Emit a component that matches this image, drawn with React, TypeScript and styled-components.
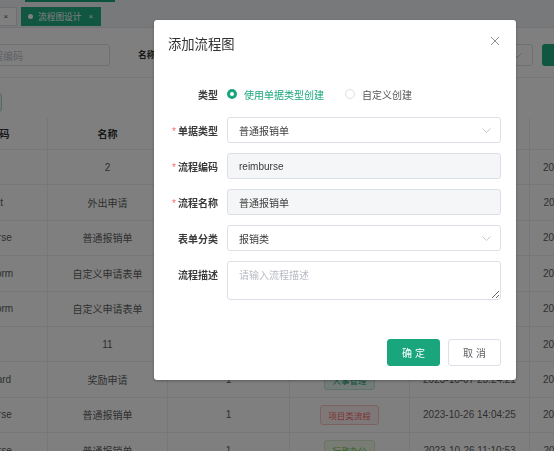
import styled, { createGlobalStyle } from "styled-components";

const GREEN = "#19a67c";

const GlobalStyle = createGlobalStyle`
  html, body {
    margin: 0;
    padding: 0;
    background: #fff;
    overflow: hidden;
  }
  body {
    font-family: "Liberation Sans", "Noto Sans CJK SC", sans-serif;
  }
  * {
    box-sizing: border-box;
  }
`;

/* ---------- background page (scrolled to the right) ---------- */

const Page = styled.div`
  width: 722px;
  height: 451px;
  margin-left: -72px;
  overflow: hidden;
`;

const NavStrip = styled.div`
  height: 3px;
  background: #f0f2f5;
  display: flex;
  align-items: flex-start;
`;

const ActiveLine = styled.div`
  margin-left: 97px;
  width: 90px;
  height: 2px;
  background: ${GREEN};
`;

const TabBar = styled.div`
  height: 25px;
  background: #f0f2f5;
  border-bottom: 1px solid #e4e7ed;
  display: flex;
  align-items: flex-start;
  gap: 4px;
  padding: 4px 0 0 42px;
`;

const Tab = styled.div<{ $active?: boolean }>`
  height: 19px;
  display: flex;
  align-items: center;
  gap: 5px;
  padding: ${({ $active }) => ($active ? "0 7px 0 6px" : "0 8px")};
  font-size: 8.7px;
  color: ${({ $active }) => ($active ? "#fff" : "#495060")};
  background: ${({ $active }) => ($active ? "#22ad83" : "#fff")};
  border: 1px solid ${({ $active }) => ($active ? "#22ad83" : "#dcdfe6")};
`;

const TabDot = styled.span`
  width: 5px;
  height: 5px;
  border-radius: 50%;
  background: #fff;
`;

const TabClose = styled.span`
  margin-left: 2px;
  font-size: 8px;
`;

const SearchRow = styled.div`
  height: 50px;
  border-bottom: 1px solid #ebeef5;
  display: flex;
  align-items: flex-start;
  padding: 16px 48px 0 14px;
`;

const SearchInput = styled.div<{ $width: number }>`
  width: ${({ $width }) => $width}px;
  height: 22px;
  border: 1px solid #dcdfe6;
  border-radius: 3px;
  display: flex;
  align-items: center;
  justify-content: space-between;
  padding: 0 10px;
  font-size: 10px;
  color: #c0c4cc;
`;

const SearchLabel = styled.label`
  margin: 0 8px 0 28px;
  line-height: 22px;
  font-size: 8.7px;
  font-weight: 700;
  color: #303133;
`;

const Spacer = styled.div`
  flex: 1;
`;

const SearchButton = styled.div`
  width: 60px;
  height: 22px;
  margin-left: 9px;
  border-radius: 3px;
  background: #22ad83;
`;

const Toolbar = styled.div`
  height: 40px;
  padding: 15px 0 0 14px;
`;

const AddButton = styled.div`
  width: 60px;
  height: 19px;
  border-radius: 3px;
  background: #e8f6f1;
  border: 1px solid #a3dbc7;
`;

const Table = styled.div`
  margin-left: 4px;
`;

const Row = styled.div<{ $head?: boolean }>`
  display: grid;
  grid-template-columns: 116px 120px 122px 120px 120px 120px;
  height: ${({ $head }) => ($head ? "32px" : "35.4px")};
`;

const Cell = styled.div<{ $head?: boolean }>`
  display: flex;
  align-items: center;
  justify-content: center;
  white-space: nowrap;
  border-right: 1px solid #ebeef5;
  border-bottom: 1px solid #ebeef5;
  font-size: 10px;
  font-weight: ${({ $head }) => ($head ? 700 : 400)};
  color: ${({ $head }) => ($head ? "#303133" : "#5e5e5e")};
`;

type Tone = "teal" | "red" | "lime";

const toneColors: Record<Tone, [string, string, string]> = {
  teal: ["#e6f6f0", "#bfe6d8", "#19a67c"],
  red: ["#fef0f0", "#fbc4c4", "#f56c6c"],
  lime: ["#f0f9eb", "#d4ecc6", "#67c23a"],
};

const Tag = styled.span<{ $tone: Tone }>`
  height: 20px;
  display: inline-flex;
  align-items: center;
  padding: 0 7px;
  border-radius: 3px;
  font-size: 8.5px;
  background: ${({ $tone }) => toneColors[$tone][0]};
  border: 1px solid ${({ $tone }) => toneColors[$tone][1]};
  color: ${({ $tone }) => toneColors[$tone][2]};
`;

/* ---------- dialog ---------- */

const Mask = styled.div`
  position: fixed;
  inset: 0;
  background: rgba(0, 0, 0, 0.5);
`;

const Dialog = styled.div`
  position: fixed;
  left: 154px;
  top: 20px;
  width: 362px;
  height: 360px;
  background: #fff;
  border-radius: 3px;
  box-shadow: 0 1px 3px rgba(0, 0, 0, 0.3);
  display: flex;
  flex-direction: column;
`;

const DialogHeader = styled.div`
  height: 46px;
  display: flex;
  align-items: center;
  justify-content: space-between;
  padding: 0 16px 0 14px;
`;

const DialogTitle = styled.span`
  font-size: 13.3px;
  color: #303133;
`;

const CloseButton = styled.span`
  display: flex;
  margin-top: -5px;
`;

const DialogBody = styled.div`
  padding: 15px 15px 0 0;
  display: flex;
  flex-direction: column;
  gap: 10px;
`;

const FormRow = styled.div`
  display: grid;
  grid-template-columns: 64px 1fr;
  column-gap: 9px;
  align-items: center;
`;

const FormLabel = styled.label<{ $top?: boolean }>`
  text-align: right;
  align-self: ${({ $top }) => ($top ? "start" : "center")};
  padding-top: ${({ $top }) => ($top ? "6px" : "0")};
  font-size: 10px;
  font-weight: 600;
  color: #3a3a3a;
  white-space: nowrap;
`;

const Required = styled.span`
  color: #f56c6c;
  font-weight: 400;
  margin-right: 2px;
`;

const RadioGroup = styled.div`
  height: 26px;
  display: flex;
  align-items: center;
  gap: 21px;
`;

const RadioItem = styled.span<{ $checked?: boolean }>`
  display: flex;
  align-items: center;
  gap: 7px;
  font-size: 10px;
  color: ${({ $checked }) => ($checked ? GREEN : "#555")};
`;

const RadioDot = styled.span<{ $checked?: boolean }>`
  width: 10px;
  height: 10px;
  border-radius: 50%;
  border: ${({ $checked }) => ($checked ? `3px solid ${GREEN}` : "1px solid #dcdfe6")};
  background: #fff;
`;

const InputBox = styled.div<{ $disabled?: boolean }>`
  height: 26px;
  border: 1px solid #dcdfe6;
  border-radius: 3px;
  background: ${({ $disabled }) => ($disabled ? "#f5f6f7" : "#fff")};
  display: flex;
  align-items: center;
  justify-content: space-between;
  padding: 0 9px 0 11px;
  font-size: 10px;
  color: #3a3a3a;
`;

const TextArea = styled.textarea`
  height: 38.5px;
  border: 1px solid #dcdfe6;
  border-radius: 3px;
  padding: 5px 11px;
  font-family: inherit;
  font-size: 10px;
  color: #333;
  resize: vertical;
  outline: none;
  display: block;
  width: 100%;

  &::placeholder {
    color: #b8bbc2;
  }
`;

const DialogFooter = styled.div`
  margin-top: auto;
  display: flex;
  justify-content: flex-end;
  gap: 8px;
  padding: 0 15px 14px 0;
`;

const Button = styled.button<{ $primary?: boolean }>`
  width: 53px;
  height: 27px;
  border-radius: 3px;
  font-family: inherit;
  font-size: 10px;
  cursor: pointer;
  background: ${({ $primary }) => ($primary ? GREEN : "#fff")};
  color: ${({ $primary }) => ($primary ? "#fff" : "#606266")};
  border: 1px solid ${({ $primary }) => ($primary ? GREEN : "#dcdfe6")};
`;

const Chevron = () => (
  <svg width="9" height="5" viewBox="0 0 9 5">
    <polyline points="0.5,0.5 4.5,4.5 8.5,0.5" fill="none" stroke="#c0c4cc" strokeWidth="0.9" />
  </svg>
);

const CloseIcon = () => (
  <svg width="10" height="10" viewBox="0 0 10 10">
    <path d="M1 1 L9 9 M9 1 L1 9" stroke="#909399" strokeWidth="1" />
  </svg>
);

interface FlowRow {
  code: string;
  name: string;
  tag: string;
  tone: Tone;
  created: string;
  updated: string;
}

const rows: FlowRow[] = [
  { code: "2", name: "2", tag: "行政办公", tone: "lime", created: "2023-09-28 10:12:36", updated: "2023-09-28 10:12:36" },
  { code: "goOut", name: "外出申请", tag: "行政办公", tone: "lime", created: "2023-09-28 16:20:11", updated: "2023-09-28 16:20:11" },
  { code: "reimburse", name: "普通报销单", tag: "报销类", tone: "teal", created: "2023-09-29 09:41:05", updated: "2023-09-29 09:41:05" },
  { code: "applyForm", name: "自定义申请表单", tag: "行政办公", tone: "lime", created: "2023-10-05 13:22:48", updated: "2023-10-05 13:22:48" },
  { code: "applyForm", name: "自定义申请表单", tag: "行政办公", tone: "lime", created: "2023-10-05 14:30:02", updated: "2023-10-05 14:30:02" },
  { code: "11", name: "11", tag: "人事管理", tone: "teal", created: "2023-10-06 18:07:42", updated: "2023-10-06 18:07:42" },
  { code: "hrReward", name: "奖励申请", tag: "人事管理", tone: "teal", created: "2023-10-07 23:24:21", updated: "2023-10-07 23:24:21" },
  { code: "reimburse", name: "普通报销单", tag: "项目类流程", tone: "red", created: "2023-10-26 14:04:25", updated: "2023-10-26 14:04:25" },
  { code: "reimburse", name: "普通报销单", tag: "行政办公", tone: "lime", created: "2023-10-26 11:10:53", updated: "2023-10-26 11:10:53" },
];

export default function App() {
  return (
    <>
      <GlobalStyle />
      <Page>
        <NavStrip>
          <ActiveLine />
        </NavStrip>
        <TabBar>
          <Tab>
            首页<TabClose>×</TabClose>
          </Tab>
          <Tab $active>
            <TabDot />
            流程图设计
            <TabClose>×</TabClose>
          </Tab>
        </TabBar>
        <SearchRow>
          <SearchInput $width={168}>请输入流程编码</SearchInput>
          <SearchLabel>名称</SearchLabel>
          <SearchInput $width={150}>请输入名称</SearchInput>
          <Spacer />
          <SearchInput $width={110}>
            请选择
            <Chevron />
          </SearchInput>
          <SearchButton />
        </SearchRow>
        <Toolbar>
          <AddButton />
        </Toolbar>
        <Table>
          <Row $head>
            <Cell $head>流程编码</Cell>
            <Cell $head>名称</Cell>
            <Cell $head>版本</Cell>
            <Cell $head>分类</Cell>
            <Cell $head>创建时间</Cell>
            <Cell $head>更新时间</Cell>
          </Row>
          {rows.map((r, i) => (
            <Row key={i}>
              <Cell>{r.code}</Cell>
              <Cell>{r.name}</Cell>
              <Cell>1</Cell>
              <Cell>
                <Tag $tone={r.tone}>{r.tag}</Tag>
              </Cell>
              <Cell>{r.created}</Cell>
              <Cell>{r.updated}</Cell>
            </Row>
          ))}
        </Table>
      </Page>

      <Mask />
      <Dialog>
        <DialogHeader>
          <DialogTitle>添加流程图</DialogTitle>
          <CloseButton>
            <CloseIcon />
          </CloseButton>
        </DialogHeader>
        <DialogBody>
          <FormRow>
            <FormLabel>类型</FormLabel>
            <RadioGroup>
              <RadioItem $checked>
                <RadioDot $checked />
                使用单据类型创建
              </RadioItem>
              <RadioItem>
                <RadioDot />
                自定义创建
              </RadioItem>
            </RadioGroup>
          </FormRow>
          <FormRow>
            <FormLabel>
              <Required>*</Required>单据类型
            </FormLabel>
            <InputBox>
              普通报销单
              <Chevron />
            </InputBox>
          </FormRow>
          <FormRow>
            <FormLabel>
              <Required>*</Required>流程编码
            </FormLabel>
            <InputBox $disabled>reimburse</InputBox>
          </FormRow>
          <FormRow>
            <FormLabel>
              <Required>*</Required>流程名称
            </FormLabel>
            <InputBox $disabled>普通报销单</InputBox>
          </FormRow>
          <FormRow>
            <FormLabel>表单分类</FormLabel>
            <InputBox>
              报销类
              <Chevron />
            </InputBox>
          </FormRow>
          <FormRow>
            <FormLabel $top>流程描述</FormLabel>
            <TextArea placeholder="请输入流程描述" />
          </FormRow>
        </DialogBody>
        <DialogFooter>
          <Button $primary>确 定</Button>
          <Button>取 消</Button>
        </DialogFooter>
      </Dialog>
    </>
  );
}
